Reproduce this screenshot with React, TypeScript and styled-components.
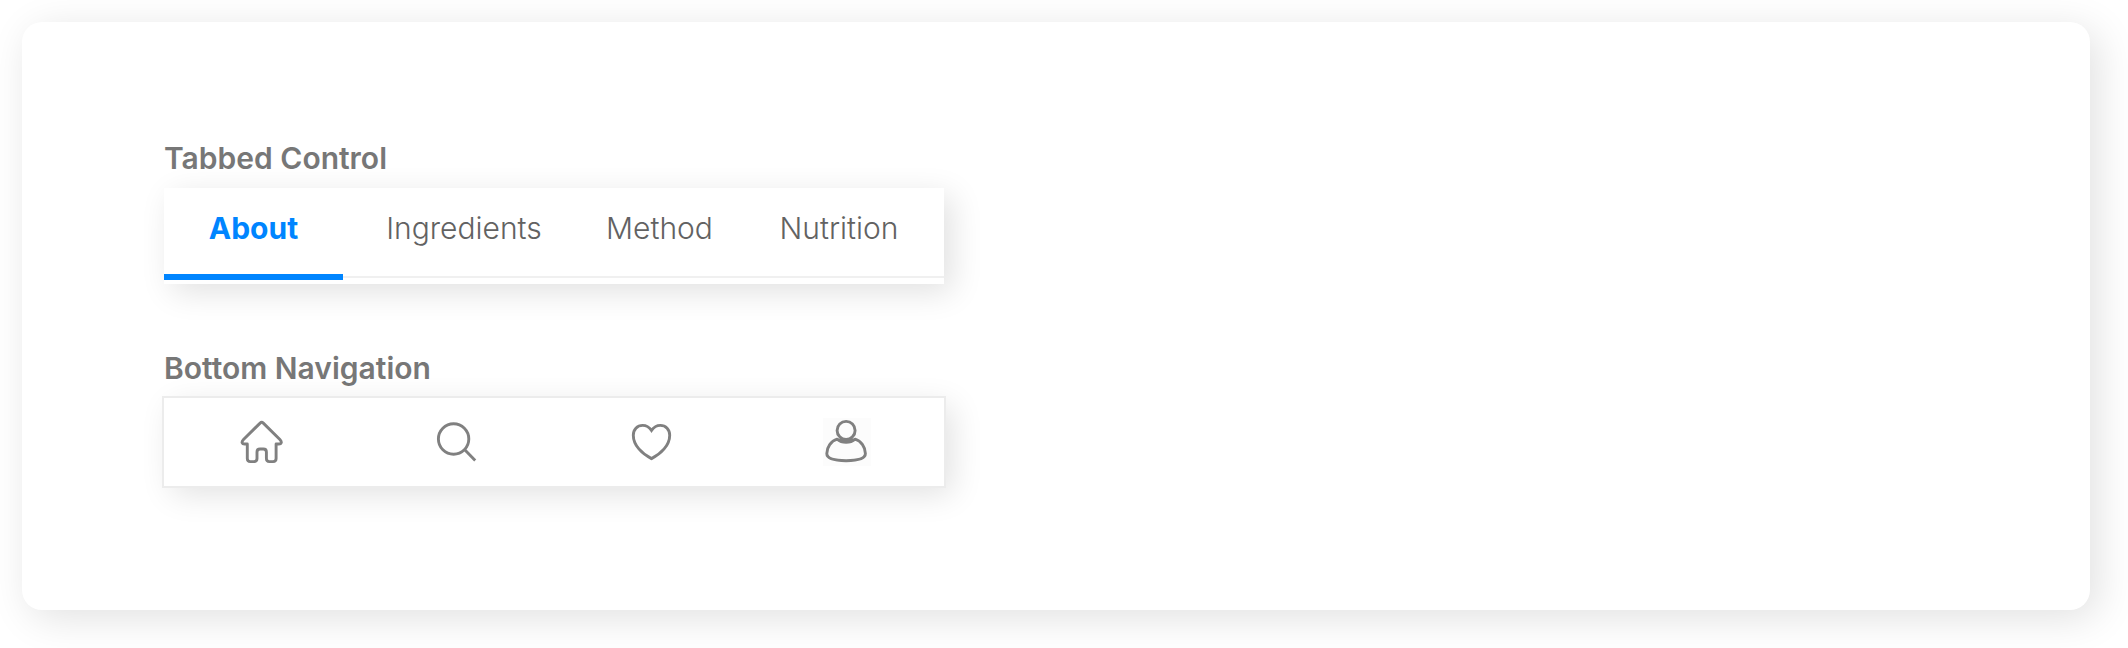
import React, { useState } from "react";
import styled, { createGlobalStyle } from "styled-components";

const GlobalStyle = createGlobalStyle`
  * { box-sizing: border-box; }
  body {
    margin: 0;
    background: #fff;
    font-family: Inter, "Liberation Sans", sans-serif;
  }
`;

const Page = styled.main`
  padding: 22px 38px 38px 22px;
`;

const Card = styled.div`
  display: flex;
  flex-direction: column;
  gap: 66px;
  padding: 118px 142px 124px;
  border-radius: 20px;
  background: #fff;
  box-shadow: 8px 8px 40px rgba(0, 0, 0, 0.12);
`;

const Section = styled.section`
  display: flex;
  flex-direction: column;
  gap: 12px;
  width: 100%;
  max-width: 780px;
`;

const Heading = styled.h2`
  margin: 0;
  color: #777;
  font-size: 30px;
  font-weight: 600;
  line-height: 36px;
`;

const TabList = styled.div`
  display: grid;
  grid-template-columns: 179fr 242fr 149fr 210fr;
  padding-bottom: 4px;
  background: #fff;
  box-shadow: 8px 8px 32px rgba(0, 0, 0, 0.12);
`;

const Tab = styled.button<{ $active: boolean }>`
  margin: 0 0 ${(p) => (p.$active ? 0 : 2)}px;
  padding: 22px 0 ${(p) => (p.$active ? 28 : 30)}px;
  border: 0;
  border-bottom: ${(p) => (p.$active ? "6px solid #0085ff" : "2px solid #f0f0f0")};
  background: none;
  color: ${(p) => (p.$active ? "#0085ff" : "#626262")};
  font-family: inherit;
  font-size: 30px;
  font-weight: ${(p) => (p.$active ? 700 : 300)};
  line-height: 36px;
  white-space: nowrap;
  cursor: pointer;
`;

const NavBar = styled.nav`
  display: grid;
  grid-template-columns: repeat(4, 1fr);
  padding: 20px 0;
  background: #fff;
  box-shadow: 0 0 0 2px #ececec, 8px 8px 32px rgba(0, 0, 0, 0.12);
`;

const NavButton = styled.button<{ $tinted?: boolean }>`
  justify-self: center;
  width: 48px;
  height: 48px;
  padding: 0;
  border: 0;
  background: ${(p) => (p.$tinted ? "#fcfcfc" : "none")};
  color: #808080;
  cursor: pointer;
`;

const Icon = styled.svg`
  display: block;
  width: 48px;
  height: 48px;
  fill: none;
  stroke: currentColor;
  stroke-width: 2.9;
  stroke-linejoin: round;
`;

const tabs = ["About", "Ingredients", "Method", "Nutrition"];

const navItems = [
  {
    label: "Home",
    art: (
      <path d="M22.6 5.1Q24.2 3.6 25.8 5.1L42.4 21.5C44.9 24.2 43.8 26 41.4 26H38.6V40.6Q38.6 43.6 35.6 43.6H31.9Q28.9 43.6 28.9 40.6V34Q28.9 31 25.9 31H22.5Q19.5 31 19.5 34V40.6Q19.5 43.6 16.5 43.6H12.8Q9.8 43.6 9.8 40.6V26H7C4.6 26 3.5 24.2 6 21.5Z" />
    ),
  },
  {
    label: "Search",
    art: (
      <>
        <circle cx="21.1" cy="21" r="15.2" />
        <path d="M32 31.6 42.7 42.5" />
      </>
    ),
  },
  {
    label: "Favourites",
    art: (
      <path
        strokeLinejoin="miter"
        d="M24 12.4C21.5 8.8 18.6 7.4 15.2 7.4C9.6 7.4 5.8 11.6 5.8 17.2C5.8 27.4 14.6 35.8 24 40.6C33.4 35.8 42.2 27.4 42.2 17.2C42.2 11.6 38.4 7.4 32.8 7.4C29.4 7.4 26.5 8.8 24 12.4Z"
      />
    ),
  },
  {
    label: "Profile",
    art: (
      <>
        <circle cx="23.6" cy="12.4" r="9" />
        <path d="M14.6 21.2C8.6 23 4.3 29 4.3 35.6C4.3 40.4 12 42.7 23.6 42.7C35.2 42.7 42.9 40.4 42.9 35.6C42.9 29 38.6 23 32.6 21.2C27.8 25.4 19.4 25.4 14.6 21.2Z" />
        <path d="M16.8 20.8Q23.6 25.2 30.4 20.8" />
      </>
    ),
  },
];

export default function App() {
  const [active, setActive] = useState("About");

  return (
    <>
      <GlobalStyle />
      <Page>
        <Card>
          <Section aria-labelledby="tabs-title">
            <Heading id="tabs-title">Tabbed Control</Heading>
            <TabList role="tablist" aria-labelledby="tabs-title">
              {tabs.map((tab) => (
                <Tab
                  key={tab}
                  type="button"
                  role="tab"
                  aria-selected={tab === active}
                  $active={tab === active}
                  onClick={() => setActive(tab)}
                >
                  {tab}
                </Tab>
              ))}
            </TabList>
          </Section>
          <Section aria-labelledby="nav-title">
            <Heading id="nav-title">Bottom Navigation</Heading>
            <NavBar aria-labelledby="nav-title">
              {navItems.map(({ label, art }) => (
                <NavButton key={label} type="button" aria-label={label} $tinted={label === "Profile"}>
                  <Icon viewBox="0.5 0 48 48" aria-hidden="true">
                    {art}
                  </Icon>
                </NavButton>
              ))}
            </NavBar>
          </Section>
        </Card>
      </Page>
    </>
  );
}
